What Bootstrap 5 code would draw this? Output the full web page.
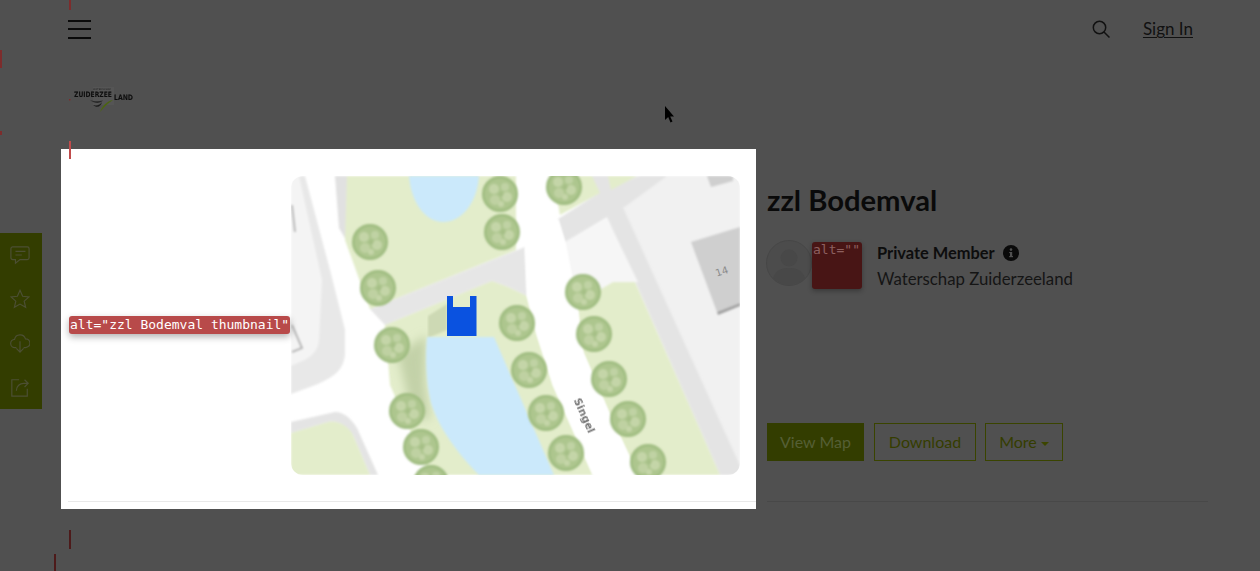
<!DOCTYPE html>
<html lang="en">
<head>
<meta charset="utf-8">
<title>zzl Bodemval</title>
<link href="https://cdn.jsdelivr.net/npm/bootstrap@5.3.0/dist/css/bootstrap.min.css" rel="stylesheet">
<style>
html,body{height:100%;}
body{background:#505050;font-family:Lato,"Noto Sans",sans-serif;color:#111;overflow:hidden;}
.stage{position:relative;height:571px;overflow:hidden;}
.topbar{height:58px;padding:0 67px 0 68px;}
.tools{gap:32px;}
.burger{width:23px;display:flex;flex-direction:column;gap:6.500px;}
.burger i{display:block;height:2px;background:#0a0a0a;}
.signin{color:#111;font-size:17px;text-decoration:underline;text-underline-offset:2px;}
.logo-row{padding:27px 0 0 69px;height:91px;}
.details{margin-left:767px;margin-right:52px;padding-top:34px;}
.ttl{font-size:29.200px;font-weight:700;line-height:34px;margin:0 0 23px;color:#0a0a0a;}
.owner{height:50px;}
.ava{width:46px;height:46px;margin-left:-1px;}
.altbox{width:50px;height:47px;background:#481515;border-radius:3px;color:#8d6060;font:13px/16px "DejaVu Sans Mono",monospace;padding-left:1px;box-shadow:0 2px 5px rgba(0,0,0,.3);margin-right:15px;margin-top:2px;white-space:nowrap;overflow:hidden;}
.who{font-size:16.800px;line-height:26px;color:#151515;}
.who b{font-weight:700;font-size:16.400px;color:#0d0d0d;}
.acts{margin-top:133px;gap:10px;}
.acts .btn{height:38px;border-radius:0;font-size:16px;line-height:1;padding:0;white-space:nowrap;border:1px solid #3a4400;color:#353d00;background:transparent;display:flex;align-items:center;justify-content:center;}
.acts .btn.solid{background:#333d00;border-color:#333d00;color:#555f35;width:97px;}
.acts .btn.dl{width:102px;}
.acts .btn.more{width:78px;margin-left:-1px;}
.caret-mini{display:inline-block;width:0;height:0;border:4px solid transparent;border-top-color:#3c4500;border-bottom:0;margin-left:4px;margin-top:3px;}
.sep{border-top:1px solid #484848;margin:40px 0 0;opacity:1;}
.rail{position:absolute;left:0;top:233px;width:42px;height:176px;background:#333d00;padding:12px 2px 12px 0;}
.dlg{position:absolute;left:61px;top:149px;width:695px;height:360px;background:#fff;padding:27px 16px 0 230px;}
.mapfig{display:block;width:449px;height:299px;border-radius:12px;}
.dlg-sep{position:absolute;left:7px;right:0;top:352px;border-top:1px solid #e9e9e9;}
.alt-tag{position:absolute;left:69px;top:316px;width:221px;height:18px;background:#b84a4a;border-radius:3px;color:#fff;font:13px/18px "DejaVu Sans Mono",monospace;padding-left:1px;white-space:nowrap;box-shadow:0 3px 7px rgba(0,0,0,.3);}
.tick{position:absolute;width:2px;background:#7d2c2c;}
.t1{left:69px;top:0;height:10px;}
.t2{left:0;top:50px;height:18px;}
.t4{left:0;top:131px;height:4px;}
.t5{left:69px;top:141px;height:18px;background:#c04b4b;}
.t6{left:69px;top:530px;height:19px;background:#4d1a1a;}
.t7{left:54px;top:554px;height:17px;background:#4d1a1a;}
.cursor{position:absolute;left:664px;top:106px;}
</style>
</head>
<body>
<div class="stage">
  <div class="topbar d-flex justify-content-between align-items-center">
    <div class="burger"><i></i><i></i><i></i></div>
    <div class="tools d-flex align-items-center">
      <svg width="20" height="20" viewBox="0 0 20 20" fill="none" stroke="#111" stroke-width="1.5"><circle cx="8.500" cy="8.500" r="6.200"/><path d="M13 13l5.500 5.500"/></svg>
      <a class="signin" href="#">Sign In</a>
    </div>
  </div>
  <div class="logo-row">
    <svg width="66" height="28" viewBox="0 0 66 28">
      <defs><filter id="lsoft" x="-5%" y="-5%" width="110%" height="110%"><feGaussianBlur stdDeviation=".25"/></filter></defs>
      <g filter="url(#lsoft)">
      <rect x="24" y="2" width="21" height="18" fill="#545454"/>
      <text x="24" y="4.500" font-size="2.400" fill="#222" font-family="DejaVu Sans" textLength="18">WATERSCHAP</text>
      <text x="5" y="12" font-size="7.400" font-weight="700" fill="#0c0c0c" font-family="DejaVu Sans Condensed,DejaVu Sans" textLength="38" lengthAdjust="spacingAndGlyphs">ZUIDERZEE</text>
      <text x="45" y="15" font-size="7.400" font-weight="700" fill="#0c0c0c" font-family="DejaVu Sans Condensed,DejaVu Sans" textLength="19" lengthAdjust="spacingAndGlyphs">LAND</text>
      <path d="M21 15c4 1.500 8 1.500 13 .500-3 3-8 3.500-13-.500z" fill="#2a2a2a"/>
      <path d="M24 20c4 1 7 0 9-3-1 4.500-5 6.500-9 3z" fill="#1c1c1c"/>
      <path d="M31 27c2-6 7-11 13-12-5 3-9 7-13 12z" fill="#4d6611"/>
      <rect x="0" y="14" width="1.500" height="1.500" fill="#7d2c2c"/>
      </g>
    </svg>
  </div>
  <div class="details">
    <h1 class="ttl">zzl Bodemval</h1>
    <div class="owner d-flex align-items-start">
      <svg class="ava" viewBox="0 0 46 46"><circle cx="23" cy="23" r="22.500" fill="#4c4c4c" stroke="#474747"/><circle cx="23" cy="18" r="8.500" fill="#484848"/><path d="M7 38c3-9 10-10 16-10s13 1 16 10a22 22 0 0 1-32 0z" fill="#484848"/></svg>
      <div class="altbox">alt=""</div>
      <div class="who">
        <div class="d-flex align-items-center"><b>Private Member</b>
          <svg class="ms-2" width="16" height="16" viewBox="0 0 16 16"><circle cx="8" cy="8" r="8" fill="#0a0a0a"/><rect x="7" y="7" width="2.200" height="5" fill="#505050"/><rect x="6.200" y="11" width="3.800" height="1.200" fill="#505050"/><rect x="6.200" y="7" width="2" height="1.100" fill="#505050"/><circle cx="8" cy="4.600" r="1.300" fill="#505050"/></svg>
        </div>
        <div>Waterschap Zuiderzeeland</div>
      </div>
    </div>
    <div class="acts d-flex">
      <button class="btn solid" type="button">View Map</button>
      <button class="btn dl" type="button">Download</button>
      <button class="btn more" type="button">More<span class="caret-mini"></span></button>
    </div>
    <hr class="sep">
  </div>

  <aside class="rail d-flex flex-column align-items-center justify-content-between">
    <svg width="20" height="20" viewBox="0 0 22 22" fill="none" stroke="#4c4f33" stroke-width="1.300"><path d="M3 2h16a2 2 0 0 1 2 2v10a2 2 0 0 1-2 2h-8l-5 4v-4H3a2 2 0 0 1-2-2V4a2 2 0 0 1 2-2z"/><path d="M6 7h11M6 11h7"/></svg>
    <svg width="20" height="20" viewBox="0 0 22 22" fill="none" stroke="#4c4f33" stroke-width="1.300"><path d="M11 1.500l2.900 6.500 7 .7-5.300 4.600 1.600 6.900L11 16.600l-6.200 3.600 1.600-6.900L1.100 8.700l7-.7z"/></svg>
    <svg width="20" height="20" viewBox="0 0 22 22" fill="none" stroke="#4c4f33" stroke-width="1.300"><path d="M7 16H5.500a4.500 4.500 0 0 1-.5-9 6.200 6.200 0 0 1 12-.6 4.800 4.800 0 0 1 .2 9.600H15"/><path d="M11 9v12M7 17l4 4 4-4"/></svg>
    <svg width="20" height="20" viewBox="0 0 22 22" fill="none" stroke="#4c4f33" stroke-width="1.300"><path d="M10 3H2v18h17v-8"/><path d="M7 15c0-5 4-8 8-8h5M16 3l4 4-4 4"/></svg>
  </aside>

  <div class="dlg">
    <svg class="mapfig" viewBox="291 176 449 299" role="img" aria-label="zzl Bodemval thumbnail">
      <defs>
        <g id="tree">
          <circle r="18" fill="#9fbc80"/>
          <circle r="15.500" fill="#adc68e"/>
          <circle cx="-6" cy="-5" r="5" fill="#c4d5a8"/>
          <circle cx="5" cy="-7" r="4" fill="#c0d2a4"/>
          <circle cx="7" cy="3" r="5" fill="#c4d5a8"/>
          <circle cx="-5" cy="6" r="5" fill="#bfd1a2"/>
          <circle cx="1" cy="0" r="2.500" fill="#a6c087"/>
          <circle cx="1" cy="10" r="3" fill="#c4d5a8"/>
        </g>
        <filter id="soft" x="-5%" y="-5%" width="110%" height="110%"><feGaussianBlur stdDeviation=".8"/></filter>
        <filter id="wide" x="-30%" y="-30%" width="160%" height="160%"><feGaussianBlur stdDeviation="5"/></filter>
      </defs>
      <rect x="291" y="176" width="449" height="299" fill="#fff"/>
      <g filter="url(#soft)">
        <path d="M291 176H305L330 270L345 330V352C345 372 330 378 318 384L291 394Z" fill="#e8e8e8"/>
        <path d="M291 176H299L322 280L319 340C318 352 310 358 300 362L291 366Z" fill="#f4f4f4"/>
        <path d="M292 205L295 232M292 325L302 348L292 352" fill="none" stroke="#b5b5b5" stroke-width="2"/>
        <path d="M291 422L335 412C345 412 352 420 357 428L378 475H370L353 435C345 424 336 420 328 422L291 433Z" fill="#e4e4e4"/>
        <path d="M291 433L328 422C338 420 348 426 353 435L370 475H291Z" fill="#e3edcb"/>
        <path d="M335 176H349L346 240L339 228Z" fill="#e1e1e1"/>
        <path d="M609 176H740V465Z" fill="#f1f1f1"/>
        <path d="M589 176H609L740 465V475H720Z" fill="#e4e4e4"/>
        <path d="M565 242L607 218L638 282H613L577 303Z" fill="#f6f6f6"/>
        <path d="M370 309L525 247L527 296L508 287L492 281L385 325Z" fill="#e6e6e6"/>
        <path d="M558 219L604 190L640 176H667L626 206L565 242Z" fill="#e4e4e4"/>
        <path d="M347 176H516V250L370 309L345 240Z" fill="#e3edcb"/>
        <path d="M553 176H592L600 193L560 215Z" fill="#e3edcb"/>
        <path d="M608 176H637L611 190Z" fill="#e3edcb"/>
        <path d="M577 303L613 282H635L720 475H638L610 415L583 352Z" fill="#e3edcb"/>
        <path d="M385 325L492 281L508 287L527 296L537 335L553 385L593 475H430L390 385Z" fill="#e3edcb"/>
      </g>
      <path d="M398 355L426 335L425 385L430 420L412 415Z" fill="#c3d1a8" filter="url(#wide)"/>
      <path d="M428 316L447 304V330L428 338Z" fill="#cdd9b4" filter="url(#soft)"/>
      <g filter="url(#soft)">
        <path d="M525 247L558 219L565 242L577 303L583 352L610 415L638 475H593L553 385L537 335L527 296Z" fill="#fff"/>
        <path d="M409 176H479C477 204 461 222 443 222S411 202 409 176Z" fill="#cbe9fb"/>
        <path d="M427 337H494L554 475H479C459 455 439 429 431 403C426 383 425 357 427 337Z" fill="#cbe9fb"/>
        <path d="M691 242L740 227V303L717 312Z" fill="#cfcfcf"/>
        <path d="M717 312L740 303V306L718 315Z" fill="#a0a0a0"/>
        <path d="M707 176H733V181L711 187Z" fill="#cfcfcf"/>
      </g>
      <text x="722" y="275" font-size="10" fill="#8a8a8a" font-family="DejaVu Sans" text-anchor="middle" transform="rotate(-18 722 272)">14</text>
      <g filter="url(#soft)">
      <use href="#tree" x="370" y="242"/><use href="#tree" x="378" y="288"/><use href="#tree" x="392" y="345"/>
      <use href="#tree" x="407" y="411"/><use href="#tree" x="421" y="447"/><use href="#tree" x="431" y="483"/>
      <use href="#tree" x="517" y="323"/><use href="#tree" x="500" y="194"/><use href="#tree" x="502" y="232"/>
      <use href="#tree" x="564" y="187"/><use href="#tree" x="583" y="292"/><use href="#tree" x="594" y="334"/>
      <use href="#tree" x="529" y="370"/><use href="#tree" x="609" y="379"/><use href="#tree" x="546" y="413"/>
      <use href="#tree" x="628" y="419"/><use href="#tree" x="566" y="453"/><use href="#tree" x="648" y="462"/>
      </g>
      <path d="M447 296H453V307H470V296H476.500V336H447Z" fill="#0a52e0"/>
      <text x="581" y="417" font-size="10.500" font-weight="700" fill="#777" font-family="DejaVu Sans" text-anchor="middle" transform="rotate(66 581 417)">Singel</text>
    </svg>
    <div class="dlg-sep"></div>
  </div>

  <div class="alt-tag">alt="zzl Bodemval thumbnail"</div>
  <span class="tick t1"></span><span class="tick t2"></span><span class="tick t4"></span><span class="tick t5"></span><span class="tick t6"></span><span class="tick t7"></span>
  <svg class="cursor" width="12" height="18" viewBox="0 0 12 18"><path d="M1 0v14l3.200-3 2.300 5.500 2-1-2.300-5H10z" fill="#000"/></svg>
</div>
<script src="https://cdn.jsdelivr.net/npm/bootstrap@5.3.0/dist/js/bootstrap.bundle.min.js"></script>
</body>
</html>
